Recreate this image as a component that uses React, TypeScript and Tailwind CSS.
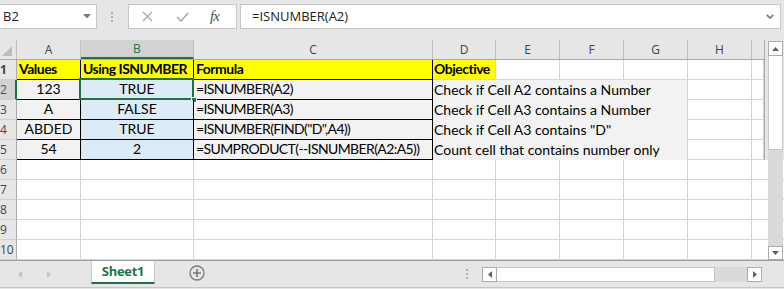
import React from "react";

function HeaderCell({ w, label, selected }: { w: string; label: string; selected?: boolean }) {
  return (
    <div
      className={`${w} shrink-0 h-full flex items-center justify-center border-r border-[#c0c0c0] ${
        selected ? "bg-[#d2d2d2] text-[#217346] border-b-2 border-b-[#217346]" : "text-[#444444]"
      } text-[12px] pt-[1px]`}
    >
      {label}
    </div>
  );
}

function RowHead({ n, selected }: { n: number; selected?: boolean }) {
  return (
    <div
      className={`w-[17px] shrink-0 h-full flex items-center pl-[0px] border-b border-[#d0d0d0] font-['Open_Sans',sans-serif] text-[12px] ${
        selected
          ? "bg-[#d2d2d2] text-[#217346] border-r-2 border-r-[#217346]"
          : "bg-[#e6e6e6] text-[#444444] border-r border-r-[#ababab]"
      }`}
    >
      {n}
    </div>
  );
}

function Empty({ w }: { w: string }) {
  return <div className={`${w} shrink-0 h-full bg-white border-r border-b border-[#d4d4d4]`} />;
}

const EMPTY_WIDTHS_ROW = ["w-[64px]", "w-[113px]", "w-[239px]", "w-[63px]", "w-[64px]", "w-[64px]", "w-[64px]", "w-[64px]"];

export default function App() {
  const data = [
    { n: 2, a: "123", b: "TRUE", c: "=ISNUMBER(A2)", d: "Check if Cell A2 contains a Number" },
    { n: 3, a: "A", b: "FALSE", c: "=ISNUMBER(A3)", d: "Check if Cell A3 contains a Number" },
    { n: 4, a: "ABDED", b: "TRUE", c: '=ISNUMBER(FIND("D",A4))', d: 'Check if Cell A3 contains "D"' },
    { n: 5, a: "54", b: "2", c: "=SUMPRODUCT(--ISNUMBER(A2:A5))", d: "Count cell that contains number only" },
  ];

  return (
    <div className="w-[784px] h-[289px] bg-[#e6e6e6] overflow-hidden flex flex-col font-['Open_Sans',sans-serif]">
      {/* Toolbar */}
      <div className="h-[40px] shrink-0 flex items-start pt-[4px]">
        <div className="w-[97px] h-[25px] bg-white border border-l-0 border-[#c6c6c6] flex items-center justify-between pl-[3px] pr-[5px]">
          <span className="text-[13px] text-[#222]">B2</span>
          <svg width="8" height="5" viewBox="0 0 8 5">
            <polygon points="0,0 8,0 4,4.5" fill="#7a7a7a" />
          </svg>
        </div>
        <div className="ml-[14px] mt-[8px] flex flex-col gap-[2px]">
          <div className="w-[2px] h-[2px] bg-[#b0b0b0]" />
          <div className="w-[2px] h-[2px] bg-[#b0b0b0]" />
          <div className="w-[2px] h-[2px] bg-[#b0b0b0]" />
        </div>
        <div className="ml-[15px] w-[109px] h-[25px] bg-white border border-[#c6c6c6] flex items-center">
          <svg className="ml-[13px]" width="11" height="11" viewBox="0 0 11 11">
            <path d="M1 1 L10 10 M10 1 L1 10" stroke="#a8a8a8" strokeWidth="1.3" fill="none" />
          </svg>
          <svg className="ml-[23px]" width="13" height="10" viewBox="0 0 13 10">
            <path d="M1 5 L5 9 L12 1" stroke="#a8a8a8" strokeWidth="1.6" fill="none" />
          </svg>
          <span className="ml-[21px] font-['Liberation_Serif',serif] italic text-[15px] text-[#505050] leading-none tracking-[-1px]">
            fx
          </span>
        </div>
        <div className="ml-[3px] w-[541px] h-[25px] bg-white border border-[#c6c6c6] flex items-center justify-between pl-[11px] pr-[6px]">
          <span className="text-[13px] text-[#222]">=ISNUMBER(A2)</span>
          <svg width="8" height="5" viewBox="0 0 8 5">
            <path d="M0.8 0.8 L4 4 L7.2 0.8" stroke="#7a7a7a" strokeWidth="1.7" fill="none" />
          </svg>
        </div>
      </div>

      {/* Grid + vertical scroll */}
      <div className="flex h-[220px] shrink-0">
        <div className="w-[765px] shrink-0 border-r border-[#ababab] flex flex-col">
          {/* column header */}
          <div className="h-[20px] shrink-0 flex border-b border-[#ababab] bg-[#e6e6e6]">
            <div className="w-[17px] shrink-0 h-full flex items-end justify-end pr-[4px] pb-[3px] border-r border-[#c0c0c0]">
              <svg width="10" height="10" viewBox="0 0 10 10">
                <polygon points="10,0 10,10 0,10" fill="#bdbdbd" />
              </svg>
            </div>
            <HeaderCell w="w-[64px]" label="A" />
            <HeaderCell w="w-[113px]" label="B" selected />
            <HeaderCell w="w-[239px]" label="C" />
            <HeaderCell w="w-[63px]" label="D" />
            <HeaderCell w="w-[64px]" label="E" />
            <HeaderCell w="w-[64px]" label="F" />
            <HeaderCell w="w-[64px]" label="G" />
            <HeaderCell w="w-[64px]" label="H" />
            <div className="w-[12px] shrink-0 h-full" />
          </div>

          {/* Row 1 */}
          <div className="h-[20px] shrink-0 flex font-['Lato',sans-serif] text-[14px] font-bold text-black whitespace-nowrap tracking-[-0.5px]">
            <RowHead n={1} />
            <div className="w-[64px] shrink-0 h-full bg-[#ffff00] border-r border-b border-black flex items-end pb-[2px] pl-[2px] leading-[16px]">
              Values
            </div>
            <div className="w-[113px] shrink-0 h-full bg-[#ffff00] border-r border-b border-black flex items-end pb-[2px] pl-[2px] leading-[16px] overflow-hidden">
              Using ISNUMBER
            </div>
            <div className="w-[239px] shrink-0 h-full bg-[#ffff00] border-r border-b border-black flex items-end pb-[2px] pl-[2px] leading-[16px]">
              Formula
            </div>
            <div className="w-[63px] shrink-0 h-full bg-[#ffff00] border-r border-b border-[#d4d4d4] flex items-end pb-[2px] pl-[1px] leading-[16px] overflow-hidden">
              Objective
            </div>
            <Empty w="w-[64px]" />
            <Empty w="w-[64px]" />
            <Empty w="w-[64px]" />
            <Empty w="w-[64px]" />
            <Empty w="w-[12px]" />
          </div>

          {data.map((r) => (
            <div key={r.n} className="h-[20px] shrink-0 flex font-['Lato',sans-serif] text-[14px] text-black whitespace-nowrap">
              <RowHead n={r.n} selected={r.n === 2} />
              <div className="w-[64px] shrink-0 h-full bg-[#f2f2f2] border-r border-b border-black flex items-end justify-center pb-[2px] leading-[16px]">
                {r.a}
              </div>
              <div className="relative w-[113px] shrink-0 h-full bg-[#ddebf7] border-r border-b border-black flex items-end justify-center pb-[2px] leading-[16px]">
                {r.b}
                {r.n === 2 && (
                  <>
                    <div className="absolute left-[-2px] top-[-2px] w-[115px] h-[22px] border-2 border-[#217346]" />
                    <div className="absolute right-[-4px] bottom-[-4px] w-[6px] h-[6px] bg-[#217346] border border-white" />
                  </>
                )}
              </div>
              <div className="w-[239px] shrink-0 h-full bg-[#f2f2f2] border-r border-b border-black flex items-end pb-[2px] pl-[2px] leading-[16px] tracking-[-0.6px] overflow-hidden">
                {r.c}
              </div>
              <div className="w-[255px] shrink-0 h-full bg-[#f2f2f2] border-r border-[#d4d4d4] flex items-end pb-[2px] pl-[1px] leading-[16px]">
                {r.d}
              </div>
              <Empty w="w-[64px]" />
              <Empty w="w-[12px]" />
            </div>
          ))}

          {[6, 7, 8, 9, 10].map((n) => (
            <div key={n} className="h-[20px] shrink-0 flex">
              <RowHead n={n} />
              {EMPTY_WIDTHS_ROW.map((w, i) => (
                <Empty key={i} w={w} />
              ))}
              <Empty w="w-[64px]" />
              <Empty w="w-[12px]" />
            </div>
          ))}
        </div>

        {/* vertical scrollbar */}
        <div className="w-[19px] shrink-0 pl-[3px] pt-[1px]">
          <div className="w-[15px] flex flex-col">
            <div className="h-[15px] bg-white border border-[#ababab] flex items-center justify-center">
              <svg width="7" height="4" viewBox="0 0 7 4">
                <polygon points="0,4 7,4 3.5,0" fill="#606060" />
              </svg>
            </div>
            <div className="h-[94px] bg-white border-x border-b border-[#c6c6c6]" />
            <div className="h-[96px] bg-[#dadada]" />
            <div className="h-[14px] bg-white border border-[#ababab] flex items-center justify-center">
              <svg width="7" height="4" viewBox="0 0 7 4">
                <polygon points="0,0 7,0 3.5,4" fill="#606060" />
              </svg>
            </div>
          </div>
        </div>
      </div>

      {/* Bottom bar */}
      <div className="h-[29px] shrink-0 border-t border-[#9e9e9e] flex flex-col">
        <div className="h-[26px] flex items-start">
          <svg className="ml-[18px] mt-[10px]" width="4" height="7" viewBox="0 0 4 7">
            <polygon points="4,0 4,7 0,3.5" fill="#c2c2c2" />
          </svg>
          <svg className="ml-[25px] mt-[10px]" width="4" height="7" viewBox="0 0 4 7">
            <polygon points="0,0 0,7 4,3.5" fill="#c2c2c2" />
          </svg>
          <div className="ml-[40px] w-[64px] h-[23px] bg-white border-x border-[#c6c6c6] border-b-2 border-b-[#217346] flex items-center justify-center">
            <span className="text-[13px] font-bold text-[#217346] tracking-[-0.3px]">Sheet1</span>
          </div>
          <svg className="ml-[34px] mt-[4px]" width="16" height="16" viewBox="0 0 16 16">
            <circle cx="8" cy="8" r="7" stroke="#7a7a7a" strokeWidth="1.3" fill="none" />
            <path d="M8 4 V12 M4 8 H12" stroke="#7a7a7a" strokeWidth="1.6" />
          </svg>
          <div className="ml-[261px] mt-[8px] flex flex-col gap-[2px]">
            <div className="w-[2px] h-[2px] bg-[#b0b0b0]" />
            <div className="w-[2px] h-[2px] bg-[#b0b0b0]" />
            <div className="w-[2px] h-[2px] bg-[#b0b0b0]" />
          </div>
          <div className="ml-[14px] mt-[6px] w-[280px] h-[15px] flex">
            <div className="w-[15px] h-full bg-white border border-[#ababab] flex items-center justify-center">
              <svg width="4" height="7" viewBox="0 0 4 7">
                <polygon points="4,0 4,7 0,3.5" fill="#606060" />
              </svg>
            </div>
            <div className="w-[218px] h-full bg-white border-y border-r border-[#c6c6c6]" />
            <div className="w-[32px] h-full bg-[#dadada]" />
            <div className="w-[15px] h-full bg-white border border-[#ababab] flex items-center justify-center">
              <svg width="4" height="7" viewBox="0 0 4 7">
                <polygon points="0,0 0,7 4,3.5" fill="#606060" />
              </svg>
            </div>
          </div>
        </div>
        <div className="h-[1px] bg-[#c6c6c6]" />
      </div>
    </div>
  );
}
